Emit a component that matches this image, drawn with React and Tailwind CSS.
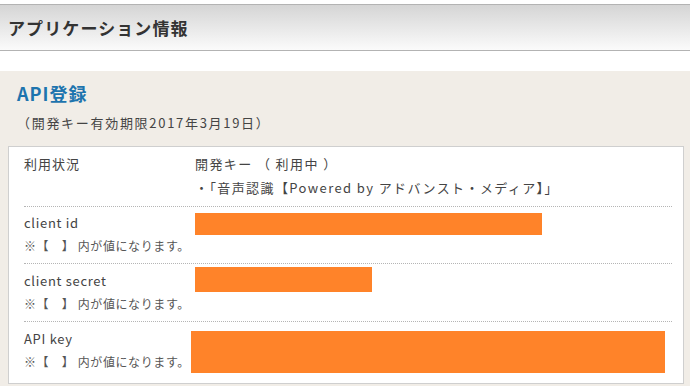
import React from "react";

const font = { fontFamily: '"Noto Sans CJK JP", "Noto Sans", sans-serif' };

const Note = () => (
  <div className="text-[12px] leading-[22px] tracking-[0.6px] text-[#555]">※【　】 内が値になります。</div>
);

export default function App() {
  return (
    <div className="w-[690px] h-[386px] bg-white overflow-hidden" style={font}>
      {/* Page title bar */}
      <div className="pt-[4px]">
        <div className="h-[47px] border-t border-b border-[#b3b3b3] bg-gradient-to-b from-[#d5d5d5] to-[#fbfbfb] flex items-center px-[8px]">
          <h1 className="text-[17px] font-bold text-[#333] tracking-[1.1px]">アプリケーション情報</h1>
        </div>
      </div>

      {/* API section */}
      <div className="mt-[20px] bg-[#f1ede7] pt-[10px] pl-[8px] pr-[6px] h-[320px]">
        <h2 className="pl-[9px] text-[18px] leading-[24px] font-bold text-[#1d74ae] tracking-[1px]">API登録</h2>
        <p className="pl-[9px] mt-[7px] text-[13px] leading-[22px] text-[#444] tracking-[1.7px]">（開発キー有効期限2017年3月19日）</p>

        <div className="mt-[12px] bg-white border border-[#cfcfcf] pl-[15px] pr-[11px] text-[13px] text-[#444]">
          {/* usage status */}
          <div className="flex pt-[5px] pb-[6px] border-b border-dotted border-[#b5b5b5]">
            <div className="w-[171px] leading-[24px] tracking-[1px]">利用状況</div>
            <div className="leading-[24px] tracking-[1.4px]">
              <div>開発キー （ 利用中 ）</div>
              <div>・「音声認識【Powered by アドバンスト・メディア】」</div>
            </div>
          </div>

          {/* client id */}
          <div className="flex pt-[4px] pb-[6px] border-b border-dotted border-[#b5b5b5]">
            <div className="w-[171px] shrink-0">
              <div className="leading-[24px] tracking-[0.7px]">client id</div>
              <Note />
            </div>
            <div className="mt-[2px] w-[347px] h-[22px] bg-[#ff8329]" />
          </div>

          {/* client secret */}
          <div className="flex pt-[5px] pb-[6px] border-b border-dotted border-[#b5b5b5]">
            <div className="w-[171px] shrink-0">
              <div className="leading-[24px] tracking-[0.7px]">client secret</div>
              <Note />
            </div>
            <div className="mt-[-2px] w-[177px] h-[25px] bg-[#ff8329]" />
          </div>

          {/* API key */}
          <div className="flex pt-[5px] pb-[10px]">
            <div className="w-[167px] shrink-0">
              <div className="leading-[24px] tracking-[0.7px]">API key</div>
              <Note />
            </div>
            <div className="mt-[4px] w-[474px] h-[42px] bg-[#ff8329]" />
          </div>
        </div>
      </div>
    </div>
  );
}
